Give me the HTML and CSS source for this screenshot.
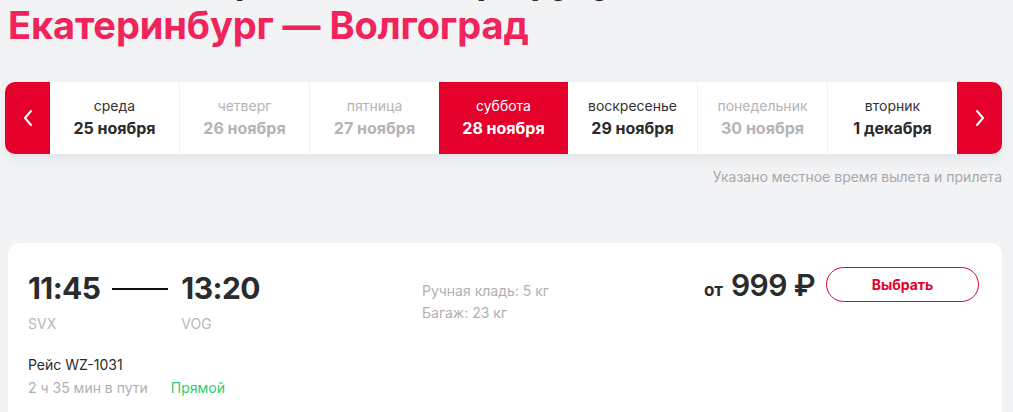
FILE: index.html
```html
<!DOCTYPE html>
<html lang="ru">
<head>
<meta charset="utf-8">
<link rel="stylesheet" href="styles.css">
</head>
<body>
<div class="page">
  <div class="crumb-title">Расписание рейсов по маршруту</div>
  <h1 class="title">Екатеринбург — Волгоград</h1>

  <div class="dates">
    <button class="arrow arrow-left" aria-label="Назад">
      <svg width="12" height="20" viewBox="0 0 12 20"><path d="M9 3 L3 10 L9 17" fill="none" stroke="#fff" stroke-width="2" stroke-linecap="round" stroke-linejoin="round"/></svg>
    </button>
    <div class="day"><span class="dname">среда</span><span class="ddate">25 ноября</span></div>
    <div class="day off"><span class="dname">четверг</span><span class="ddate">26 ноября</span></div>
    <div class="day off"><span class="dname">пятница</span><span class="ddate">27 ноября</span></div>
    <div class="day active"><span class="dname">суббота</span><span class="ddate">28 ноября</span></div>
    <div class="day"><span class="dname">воскресенье</span><span class="ddate">29 ноября</span></div>
    <div class="day off"><span class="dname">понедельник</span><span class="ddate">30 ноября</span></div>
    <div class="day"><span class="dname">вторник</span><span class="ddate">1 декабря</span></div>
    <button class="arrow arrow-right" aria-label="Вперёд">
      <svg width="12" height="20" viewBox="0 0 12 20"><path d="M3 3 L9 10 L3 17" fill="none" stroke="#fff" stroke-width="2" stroke-linecap="round" stroke-linejoin="round"/></svg>
    </button>
  </div>
  <div class="note">Указано местное время вылета и прилета</div>

  <div class="card">
    <div class="flight">
      <div class="times">
        <div class="point">
          <span class="time">11:45</span>
          <span class="code">SVX</span>
        </div>
        <span class="dash"></span>
        <div class="point">
          <span class="time">13:20</span>
          <span class="code">VOG</span>
        </div>
      </div>
      <div class="meta">
        <div class="num">Рейс WZ-1031</div>
        <div class="dur"><span>2 ч 35 мин в пути</span><span class="direct">Прямой</span></div>
      </div>
    </div>
    <div class="bags">
      <div>Ручная кладь: 5 кг</div>
      <div>Багаж: 23 кг</div>
    </div>
    <div class="buy">
      <div class="price"><span class="from">от</span><span class="amount">999 ₽</span></div>
      <button class="select">Выбрать</button>
    </div>
  </div>
</div>
</body>
</html>
```
FILE: styles.css
```css
* { box-sizing: border-box; }
html, body { margin: 0; padding: 0; }
body {
  background: #f2f3f5;
  font-family: Inter, "Noto Sans", "Liberation Sans", sans-serif;
  color: #2b2b2b;
  overflow: hidden;
  height: 412px;
}
.page { padding: 0 11px 0 5px; }
.crumb-title {
  font-size: 36px;
  font-weight: 700;
  color: #2b2b2b;
  line-height: 44px;
  margin-top: -41px;
  margin-bottom: -1px;
  padding-left: 3px;
}
.title {
  margin: 0;
  padding-left: 3px;
  font-size: 38px;
  line-height: 47px;
  font-weight: 700;
  color: #f0245a;
  letter-spacing: -0.1px;
}
.dates {
  margin-top: 33px;
  display: flex;
  height: 72px;
  background: #fff;
  border-radius: 10px;
  box-shadow: 0 6px 14px rgba(0,0,0,0.06);
}
.arrow {
  width: 45px;
  flex: none;
  border: 0;
  padding: 0;
  background: #e4002b;
  display: flex;
  align-items: center;
  justify-content: center;
}
.arrow-left { border-radius: 10px 0 0 10px; }
.arrow-right { border-radius: 0 10px 10px 0; }
.day {
  flex: 1;
  display: flex;
  flex-direction: column;
  align-items: center;
  justify-content: center;
  gap: 2px;
  border-left: 1px solid #f0f0f0;
}
.day:nth-child(2) { border-left: 0; }
.dname { font-size: 14px; color: #333; line-height: 18px; }
.ddate { font-size: 16px; font-weight: 700; color: #2b2b2b; line-height: 22px; }
.day.off .dname, .day.off .ddate { color: #b4b4b4; }
.day.active { background: #e4002b; border-left: 0; }
.day.active + .day { border-left: 0; }
.day.active .dname, .day.active .ddate { color: #fff; }
.note {
  text-align: right;
  font-size: 14px;
  color: #a9a9a9;
  margin-top: 14px;
  line-height: 18px;
}
.card {
  margin: 57px 0 0 3px;
  background: #fff;
  border-radius: 12px;
  height: 200px;
  display: flex;
  padding: 20px 23px 0 20px;
}
.flight { width: 394px; flex: none; }
.times { display: flex; align-items: flex-start; }
.point { display: flex; flex-direction: column; }
.time { font-size: 30px; font-weight: 700; line-height: 50px; color: #2b2b2b; letter-spacing: -0.6px; }
.code { font-size: 14px; color: #b8b8b8; line-height: 18px; margin-top: 2px; }
.dash {
  width: 56px;
  height: 2px;
  background: #111;
  margin: 25px 13px 0 12px;
}
.meta { margin-top: 22px; }
.num { font-size: 14px; line-height: 20px; color: #2b2b2b; }
.dur { font-size: 14px; line-height: 20px; color: #b0b0b0; margin-top: 3px; display: flex; gap: 23px; }
.direct { color: #2ecc71; }
.bags {
  padding-top: 17px;
  font-size: 14px;
  line-height: 22px;
  color: #b0b0b0;
}
.buy {
  margin-left: auto;
  display: flex;
  align-items: flex-start;
  gap: 11px;
}
.price { display: flex; align-items: baseline; gap: 8px; margin-top: 4px; }
.from { font-size: 17px; font-weight: 700; color: #2b2b2b; }
.amount { font-size: 30px; font-weight: 600; color: #2b2b2b; line-height: 36px; letter-spacing: -0.6px; }
.select {
  width: 153px;
  height: 35px;
  margin-top: 4px;
  border: 1px solid #e4002b;
  border-radius: 18px;
  background: #fff;
  color: #e4002b;
  font-family: inherit;
  font-size: 14px;
  font-weight: 700;
}
```
